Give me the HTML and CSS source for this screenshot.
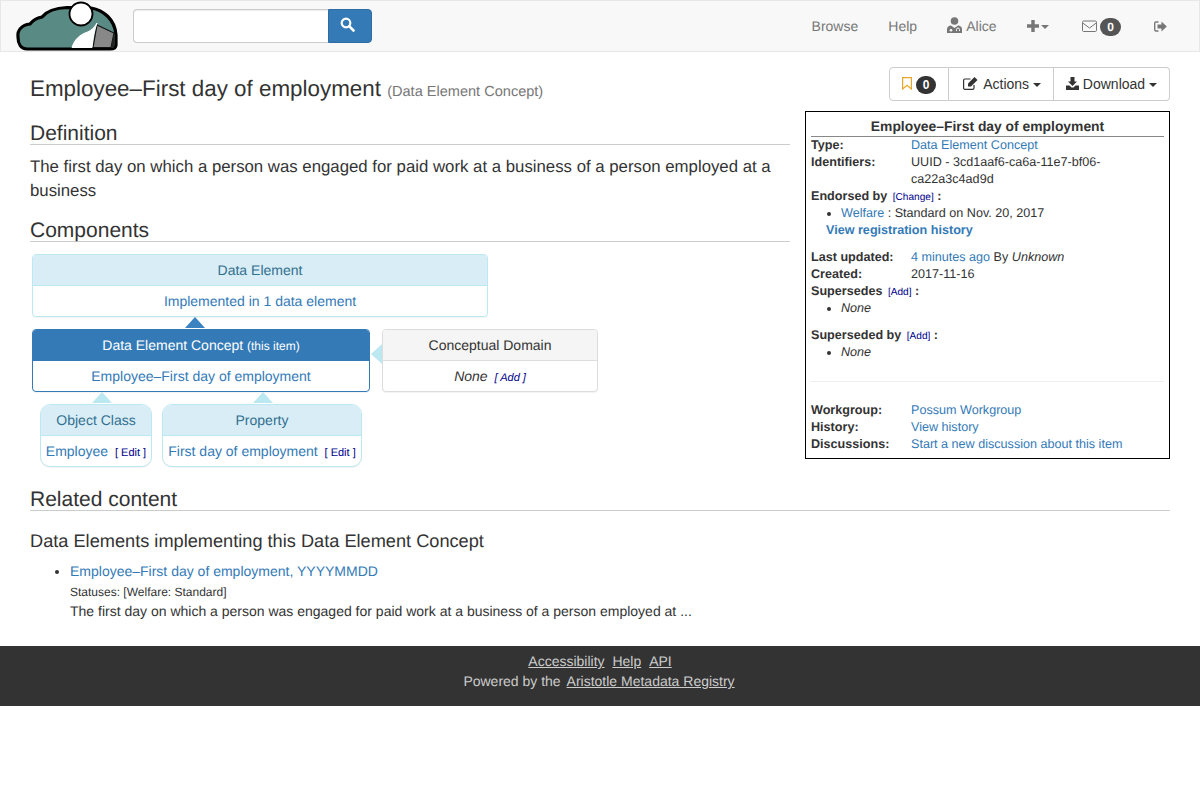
FILE: index.html
```html
<!DOCTYPE html>
<html lang="en">
<head>
<meta charset="utf-8">
<title>Employee–First day of employment</title>
<link rel="stylesheet" href="styles.css">
</head>
<body>
<nav class="navbar">
  <a class="logo" href="#" aria-label="Aristotle">
    <svg width="104" height="50" viewBox="0 0 104 50">
      <path d="M3 36C2 29 7 24 15 23C18 19 22 17 27 16C31 11 40 7 52 6.500L76 7C88 9 100 18 101 34L101 44C101 47 99 48 95 48L12 48C6 48 3 43 3 36Z" fill="#5a8a84" stroke="#000" stroke-width="3.200"/>
      <path d="M82 24L99 32L96 46.500L78 46.500Z" fill="#888" stroke="#111" stroke-width="1.200"/>
      <path d="M99 32C100 37 100 42 99 47L96 47Z" fill="#222"/>
      <path d="M57 46.500C59 40 63 35 70 32C76 30 79 27 82 22C79 30 78 38 77 46.500Z" fill="#fff" stroke="#fff"/>
      <circle cx="66" cy="13" r="11.500" fill="#fff" stroke="#000" stroke-width="1.800"/>
    </svg>
  </a>
  <form class="search">
    <input class="search-input" type="text" aria-label="Search">
    <button class="search-btn" type="button" aria-label="Search">
      <svg class="ico" width="15" height="15" viewBox="0 0 15 15"><circle cx="6" cy="6" r="4.300" fill="none" stroke="#fff" stroke-width="2.200"/><path d="M9.200 9.200L13.500 13.500" stroke="#fff" stroke-width="2.600" stroke-linecap="round"/></svg>
    </button>
  </form>
  <ul class="nav-links">
    <li><a href="#">Browse</a></li>
    <li><a href="#">Help</a></li>
    <li><a href="#"><svg class="ico ico-user" width="15" height="16" viewBox="0 0 15 16"><circle cx="7.500" cy="4" r="3.800" fill="#777"/><path d="M0 16V12C0 10 2 8.500 4 8.500L7.500 11L11 8.500C13 8.500 15 10 15 12V16Z" fill="#777"/><circle cx="4" cy="13.300" r="1.300" fill="#f8f8f8"/><path d="M9.500 14V12.500A1.500 1.500 0 0 1 12.500 12.500V14" fill="none" stroke="#f8f8f8"/></svg> Alice</a></li>
    <li><a href="#"><svg class="ico" width="12" height="12" viewBox="0 0 12 12"><path d="M4.300 0H7.700V4.300H12V7.700H7.700V12H4.300V7.700H0V4.300H4.300Z" fill="#777"/></svg> <span class="caret caret-nav"></span></a></li>
    <li><a href="#"><svg class="ico ico-mail" width="15" height="12" viewBox="0 0 15 12"><rect x=".5" y="1" width="14" height="10.500" rx="1.200" fill="none" stroke="#777"/><path d="M1 3.200L7.500 8L14 3.200" fill="none" stroke="#777"/></svg> <span class="badge badge-nav">0</span></a></li>
    <li><a href="#"><svg class="ico" width="13" height="11" viewBox="0 0 13 11"><path d="M4.500 1H2C1 1 .7 1.700 .7 2.500V8.500C.7 9.300 1 10 2 10H4.500" fill="none" stroke="#777" stroke-width="1.400"/><path d="M7.500 .5L12.800 5.500L7.500 10.500V7.500H3.500V3.500H7.500Z" fill="#777"/></svg></a></li>
  </ul>
</nav>

<main class="page">
  <div class="top">
    <div class="content">
      <h1 class="title">Employee–First day of employment <small>(Data Element Concept)</small></h1>
      <h2 class="section">Definition</h2>
      <p class="definition">The first day on which a person was engaged for paid work at a business of a person employed at a business</p>
      <h2 class="section">Components</h2>
      <div class="diagram">
        <div class="card card-info card-top">
          <div class="card-head">Data Element</div>
          <div class="card-body"><a href="#">Implemented in 1 data element</a></div>
        </div>
        <div class="row-mid">
          <div class="card card-primary card-main">
            <span class="arrow arrow-up arrow-dark"></span>
            <div class="card-head">Data Element Concept <small>(this item)</small></div>
            <div class="card-body"><a href="#">Employee–First day of employment</a></div>
          </div>
          <div class="card card-default card-domain">
            <span class="arrow arrow-left"></span>
            <div class="card-head">Conceptual Domain</div>
            <div class="card-body"><em>None</em> <a class="edit" href="#"><em>[ Add ]</em></a></div>
          </div>
        </div>
        <div class="row-low">
          <div class="card card-info card-round card-object">
            <span class="arrow arrow-up"></span>
            <div class="card-head">Object Class</div>
            <div class="card-body"><a href="#">Employee</a> <a class="edit" href="#">[ Edit ]</a></div>
          </div>
          <div class="card card-info card-round card-property">
            <span class="arrow arrow-up"></span>
            <div class="card-head">Property</div>
            <div class="card-body"><a href="#">First day of employment</a> <a class="edit" href="#">[ Edit ]</a></div>
          </div>
        </div>
      </div>
    </div>
    <aside class="side">
      <div class="btn-group">
        <button class="btn" type="button"><svg class="ico" width="10" height="13" viewBox="0 0 10 13"><path d="M.6 .6H9.400V12L5 8.200L.6 12Z" fill="none" stroke="#e6a72a" stroke-width="1.200"/></svg> <span class="badge badge-dark">0</span></button>
        <button class="btn btn-actions" type="button"><svg class="ico ico-edit" width="15" height="13" viewBox="0 0 15 13"><path d="M11 8V11C11 11.800 10.500 12.300 9.700 12.300H1.800C1 12.300 .6 11.800 .6 11V3.300C.6 2.500 1 2 1.800 2H7.500" fill="none" stroke="#333" stroke-width="1.200"/><path d="M5 6.500L11.500 0L14.500 3L8 9.500H5Z" fill="#333"/></svg> Actions <span class="caret"></span></button>
        <button class="btn" type="button"><svg class="ico" width="13" height="13" viewBox="0 0 13 13"><path d="M4.500 0H8.500V4.500H11L6.500 9L2 4.500H4.500Z" fill="#333"/><path d="M0 8.500H3.500L5.500 10.500H7.500L9.500 8.500H13V13H0Z" fill="#333"/></svg> Download <span class="caret"></span></button>
      </div>
      <div class="infobox">
        <h3 class="info-title">Employee–First day of employment</h3>
        <dl class="info-list">
          <dt>Type:</dt><dd><a href="#">Data Element Concept</a></dd>
          <dt>Identifiers:</dt><dd>UUID - 3cd1aaf6-ca6a-11e7-bf06-ca22a3c4ad9d</dd>
        </dl>
        <div class="info-block">
          <strong>Endorsed by</strong> <a class="edit-small" href="#">[Change]</a> <strong>:</strong>
          <ul class="info-ul"><li><a href="#">Welfare</a> : Standard on Nov. 20, 2017</li></ul>
          <a class="history-link" href="#">View registration history</a>
        </div>
        <dl class="info-list info-gap">
          <dt>Last updated:</dt><dd><a href="#">4 minutes ago</a> By <em>Unknown</em></dd>
          <dt>Created:</dt><dd>2017-11-16</dd>
        </dl>
        <div class="info-block">
          <strong>Supersedes</strong> <a class="edit-small" href="#">[Add]</a> <strong>:</strong>
          <ul class="info-ul"><li><em>None</em></li></ul>
        </div>
        <div class="info-block info-gap">
          <strong>Superseded by</strong> <a class="edit-small" href="#">[Add]</a> <strong>:</strong>
          <ul class="info-ul"><li><em>None</em></li></ul>
        </div>
        <hr class="info-rule">
        <dl class="info-list">
          <dt>Workgroup:</dt><dd><a href="#">Possum Workgroup</a></dd>
          <dt>History:</dt><dd><a href="#">View history</a></dd>
          <dt>Discussions:</dt><dd><a href="#">Start a new discussion about this item</a></dd>
        </dl>
      </div>
    </aside>
  </div>
  <h2 class="section section-related">Related content</h2>
  <h3 class="related-title">Data Elements implementing this Data Element Concept</h3>
  <ul class="related-list">
    <li>
      <a href="#">Employee–First day of employment, YYYYMMDD</a>
      <div class="statuses">Statuses: [Welfare: Standard]</div>
      <div>The first day on which a person was engaged for paid work at a business of a person employed at ...</div>
    </li>
  </ul>
</main>

<footer class="footer">
  <div class="footer-links"><a href="#">Accessibility</a> <a href="#">Help</a> <a href="#">API</a></div>
  <div>Powered by the <a href="#">Aristotle Metadata Registry</a></div>
</footer>
</body>
</html>
```
FILE: styles.css
```css
* { box-sizing: border-box; }
body { margin: 0; font: 14px/20px "Liberation Sans", Arial, sans-serif; color: #333; background: #fff; text-rendering: geometricPrecision; }
a { color: #337ab7; text-decoration: none; }
.ico { vertical-align: -1px; }
.ico-user { margin-right: 1px; vertical-align: -2px; }
.ico-mail { margin-right: -1px; }
.ico-edit { margin-right: 2px; }
.caret { display: inline-block; width: 0; height: 0; vertical-align: middle; border-top: 4px solid; border-left: 4px solid transparent; border-right: 4px solid transparent; }
.caret-nav { margin-left: -1px; margin-right: 3px; }
.badge { display: inline-block; min-width: 10px; padding: 3px 7px; font-size: 12px; font-weight: 700; line-height: 12px; color: #fff; text-align: center; background: #555; border-radius: 10px; vertical-align: middle; }
.badge-nav { margin-right: 3px; }
.badge-dark { padding: 3px 6.5px; background: #333; }

.navbar { display: flex; align-items: flex-start; height: 52px; background: #f8f8f8; border: 1px solid #e7e7e7; }
.logo { display: block; margin-left: 14px; height: 50px; }
.logo svg { display: block; }
.search { display: flex; margin: 8px 0 0 14px; }
.search-input { width: 195px; height: 34px; padding: 6px 12px; border: 1px solid #ccc; border-right: 0; border-radius: 4px 0 0 4px; background: #fff; box-shadow: inset 0 1px 1px rgba(0,0,0,.075); }
.search-btn { width: 44px; height: 34px; padding: 0 6px 2px 0; background: #337ab7; border: 1px solid #2e6da4; border-radius: 0 4px 4px 0; }
.nav-links { display: flex; margin: 0 17px 0 auto; padding: 0; list-style: none; }
.nav-links a { display: block; padding: 15px; color: #777; line-height: 20px; }

.page { padding: 15px 30px 0; }
.top { display: flex; gap: 15px; align-items: flex-start; }
.content { width: 760px; flex: none; }
.side { width: 365px; flex: none; }
.title { margin: 0; font-size: 22.4px; font-weight: 400; line-height: 26px; padding-top: 9px; }
.title small { font-size: 14.56px; color: #777; }
.section { margin: 19px 0 0; font-size: 21px; font-weight: 400; line-height: 20px; border-bottom: 1px solid #ccc; }
.definition { margin: 10px 0 0; font-size: 16.8px; line-height: 23.52px; }
.content .section:nth-of-type(2) { margin-top: 19px; }

.diagram { padding: 12px 0 0 2px; text-align: center; }
.card { position: relative; background: #fff; border: 1px solid #bce8f1; border-radius: 4px; box-shadow: 0 1px 1px rgba(0,0,0,.05); }
.card-head { height: 31px; line-height: 30px; border-bottom: 1px solid #bce8f1; background: #d9edf7; color: #31708f; border-radius: 3px 3px 0 0; }
.card-body { height: 30px; line-height: 30px; }
.card-top { width: 456px; }
.row-mid { display: flex; gap: 12px; margin-top: 12px; align-items: flex-start; }
.row-low { display: flex; gap: 10px; margin: 12px 0 0 8px; align-items: flex-start; }
.card-main { width: 338px; border-color: #337ab7; }
.card-primary .card-head { background: #337ab7; color: #fff; border-color: #337ab7; }
.card-primary small { font-size: 12px; }
.card-default { border-color: #ddd; }
.card-default .card-head { background: #f5f5f5; color: #333; border-color: #ddd; }
.card-domain { width: 216px; }
.card-round { border-radius: 10px; }
.card-round .card-head { border-radius: 9px 9px 0 0; }
.card-object { width: 112px; }
.card-property { width: 200px; }
.edit { margin-left: 3px; font-size: 11px; color: #00008b; }
.arrow { position: absolute; }
.arrow-up { top: -13px; border-bottom: 11px solid #bce8f1; border-left: 10px solid transparent; border-right: 10px solid transparent; }
.arrow-dark { border-bottom-color: #3b82c0; }
.card-main .arrow-up { left: 152px; }
.card-object .arrow-up { left: 51px; }
.card-property .arrow-up { left: 90px; }
.arrow-left { left: -12px; top: 14px; border-right: 11px solid #bce8f1; border-top: 10.5px solid transparent; border-bottom: 10.5px solid transparent; }

.btn-group { display: flex; justify-content: flex-end; height: 34px; }
.btn { height: 34px; padding: 0 12px; font: inherit; color: #333; background: #fff; border: 1px solid #ccc; border-left: 0; }
.btn:first-child { border-left: 1px solid #ccc; border-radius: 4px 0 0 4px; }
.btn:last-child { border-radius: 0 4px 4px 0; }
.btn-actions { padding-left: 14px; }
.infobox { margin-top: 10px; padding: 5px; border: 1px solid #000; font-size: 12.6px; line-height: 17px; }
.info-title { margin: 0; font-size: 13.86px; font-weight: 700; line-height: 19px; text-align: center; border-bottom: 1px solid #888; }
.info-list { display: grid; grid-template-columns: 100px 1fr; margin: 0; }
.info-list dt { font-weight: 700; }
.info-list dd { margin: 0; }
.info-gap { margin-top: 10px; }
.info-ul { margin: 0; padding-left: 30px; }
.edit-small { font-size: 10.08px; line-height: 1; color: #00008b; margin-left: 2px; }
.history-link { display: block; padding-left: 15px; font-weight: 700; }
.info-rule { margin: 20px 0 20px; border: 0; border-top: 1px solid #eee; }

.section-related { margin-top: 23px; }
.related-title { margin: 19px 0 0; font-size: 18.2px; font-weight: 400; line-height: 23px; }
.related-list { margin: 9px 0 0; padding-left: 40px; line-height: 19px; }
.statuses { margin-top: 1px; font-size: 12px; line-height: 20px; }

.footer { margin-top: 25px; height: 60px; padding-top: 5px; background: #333; color: #ccc; text-align: center; }
.footer a { color: #ccc; text-decoration: underline; margin: 0 2px; }
```
